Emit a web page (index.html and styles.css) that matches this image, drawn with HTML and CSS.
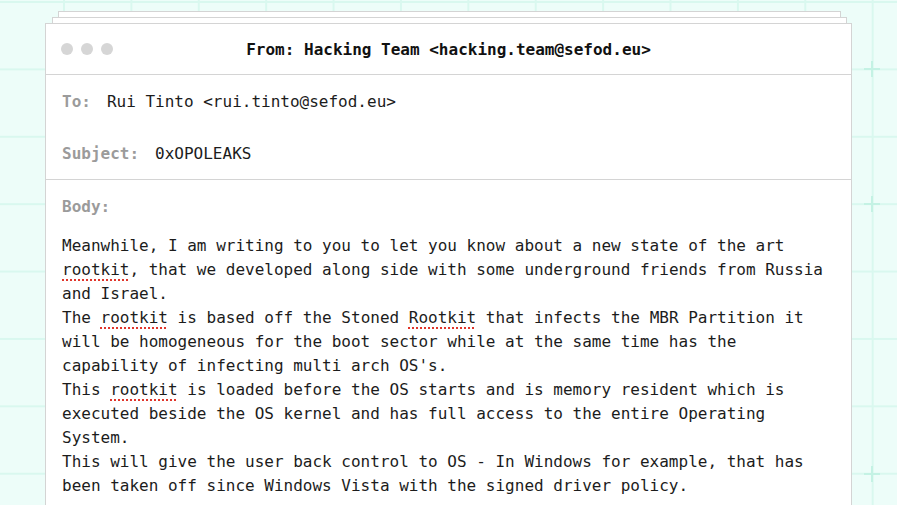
FILE: index.html
```html
<!DOCTYPE html>
<html lang="en">
<head>
<meta charset="utf-8">
<title>Mail</title>
<link rel="stylesheet" href="styles.css">
</head>
<body>
<div class="stage">
  <span class="plus p1"></span>
  <span class="plus p2"></span>
  <span class="plus p3"></span>
  <div class="card">
    <div class="head">
      <div class="dots"><i></i><i></i><i></i></div>
      <div class="title">From: Hacking Team &lt;hacking.team@sefod.eu&gt;</div>
      <div></div>
    </div>
    <div class="fields">
      <div class="row"><span class="label">To:</span><span class="value">Rui Tinto &lt;rui.tinto@sefod.eu&gt;</span></div>
      <div class="row"><span class="label">Subject:</span><span class="value">0xOPOLEAKS</span></div>
    </div>
    <div class="bodysec">
      <div class="row"><span class="label">Body:</span></div>
      <div class="text">Meanwhile, I am writing to you to let you know about a new state of the art<br><span class="sp">rootkit</span>, that we developed along side with some underground friends from Russia<br>and Israel.<br>The <span class="sp">rootkit</span> is based off the Stoned <span class="sp">Rootkit</span> that infects the MBR Partition it<br>will be homogeneous for the boot sector while at the same time has the<br>capability of infecting multi arch OS's.<br>This <span class="sp">rootkit</span> is loaded before the OS starts and is memory resident which is<br>executed beside the OS kernel and has full access to the entire Operating<br>System.<br>This will give the user back control to OS - In Windows for example, that has<br>been taken off since Windows Vista with the signed driver policy.<br>&nbsp;</div>
    </div>
  </div>
</div>
</body>
</html>
```
FILE: styles.css
```css
html, body {
  margin: 0;
  height: 100%;
  overflow: hidden;
}
body {
  background-color: #edfdf9;
  background-image:
    linear-gradient(90deg, #d9f8ef 2px, transparent 2px),
    linear-gradient(#d9f8ef 2px, transparent 2px);
  background-size: 67.4px 67.4px;
  background-position: 63px 1px;
  font-family: "DejaVu Sans Mono", "Liberation Mono", monospace;
  font-size: 16px;
  color: #1c1c1c;
}
.stage {
  position: relative;
  padding-top: 23px;
}
.plus {
  position: absolute;
  width: 16px;
  height: 16px;
  background:
    linear-gradient(#c4f2e4, #c4f2e4) center / 16px 2px no-repeat,
    linear-gradient(#c4f2e4, #c4f2e4) center / 2px 16px no-repeat;
}
.p1 { left: 864px; top: 61px; }
.p2 { left: 864px; top: 196px; }
.p3 { left: 864px; top: 466px; }
.card {
  position: relative;
  box-sizing: border-box;
  width: 807px;
  margin: 0 0 0 45px;
  background: #fff;
  border: 1px solid #d4d4d4;
  border-bottom: none;
  min-height: 600px;
}
.card::before,
.card::after {
  content: "";
  position: absolute;
  background: #fff;
  border: 1px solid #d4d4d4;
  z-index: -1;
  height: 40px;
}
.card::before {
  left: 12px;
  right: 10px;
  top: -13px;
  z-index: -2;
}
.card::after {
  left: 6px;
  right: 4px;
  top: -7px;
}
.head {
  height: 50px;
  border-bottom: 1px solid #d4d4d4;
  display: grid;
  grid-template-columns: 1fr auto 1fr;
  align-items: center;
  padding: 0 15px;
}
.dots {
  display: flex;
  gap: 8px;
}
.dots i {
  width: 12px;
  height: 12px;
  border-radius: 50%;
  background: #d6d6d6;
}
.title {
  font-weight: bold;
  color: #111;
}
.fields {
  border-bottom: 1px solid #d4d4d4;
}
.row {
  box-sizing: border-box;
  height: 52px;
  padding: 2px 16px 0;
  display: flex;
  align-items: center;
  gap: 16px;
  line-height: 24px;
}
.label {
  color: #9b9b9b;
  font-weight: bold;
}
.text {
  padding: 2px 16px 0;
  line-height: 24px;
  white-space: nowrap;
}
.sp {
  text-decoration: underline dotted #e0352b;
  text-decoration-thickness: 2px;
  text-underline-offset: 4px;
}
```
